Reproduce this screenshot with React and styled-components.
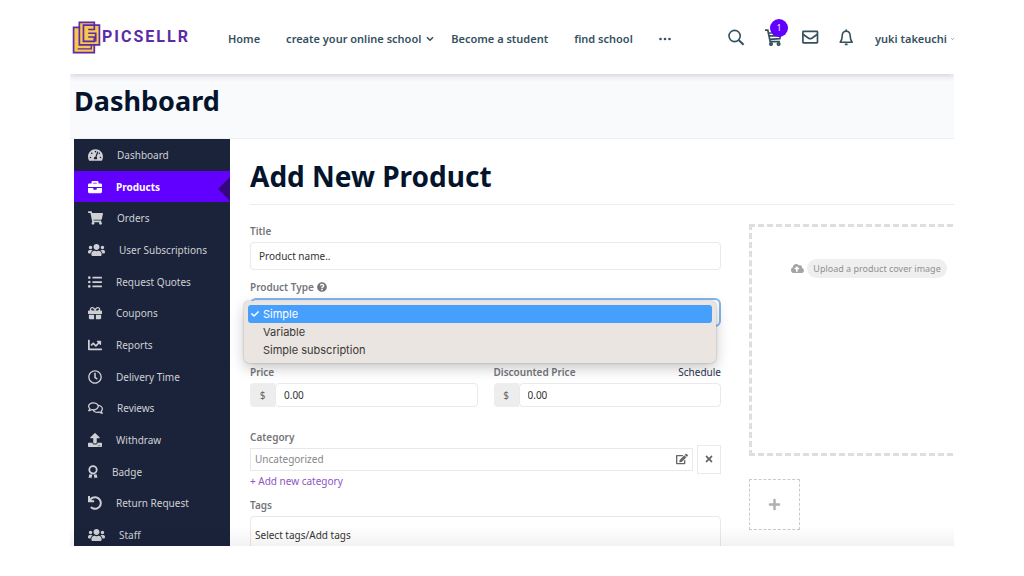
import React from 'react';
import styled, { createGlobalStyle, css } from 'styled-components';
import {
  FaTachometerAlt, FaBriefcase, FaShoppingCart, FaUsers, FaListUl, FaGift, FaChartLine,
  FaRegClock, FaRegComments, FaUpload, FaUndo, FaQuestionCircle, FaEdit, FaTimes,
  FaCloudUploadAlt, FaPlus, FaCheck,
} from 'react-icons/fa';

const Global = createGlobalStyle`
  * { box-sizing: border-box; }
  body { margin: 0; background: #fff; font-family: "Noto Sans", "Open Sans", sans-serif; font-size: 10px; color: #333; }
  button, input, select { font: inherit; color: inherit; margin: 0; }
  button { border: 0; background: none; padding: 0; }
  h1, h2, ul { margin: 0; padding: 0; }
  ul { list-style: none; }
  a { text-decoration: none; color: inherit; }
`;

const Frame = styled.div`
  position: relative;
  height: calc(100vh - 30px);
  margin: 0 70px;
  overflow: hidden;
  &::after {
    content: "";
    position: absolute;
    inset: auto 0 0 0;
    height: 20px;
    background: linear-gradient(transparent, rgba(0, 0, 0, 0.05));
    pointer-events: none;
  }
`;

const Header = styled.header`
  position: relative;
  display: flex;
  align-items: center;
  height: 74px;
  padding-left: 2px;
  color: #35505f;
  box-shadow: 0 2px 6px rgba(40, 40, 80, 0.18);
`;

const Logo = styled.a`
  display: flex;
  flex: none;
  align-items: center;
  gap: 1px;
  width: 122px;
  color: #5b2ba8;
  font: 700 16px/20px Roboto, sans-serif;
  letter-spacing: 2px;
  svg { flex: none; }
`;

const Nav = styled.nav`
  display: flex;
  align-items: center;
  gap: 26px;
  margin-left: 34px;
  padding-top: 3px;
  font-size: 11px;
  line-height: 16px;
  font-weight: 600;
  white-space: nowrap;
`;

const NavGroup = styled.div`
  display: flex;
  align-items: center;
  gap: 17px;
`;

const NavLink = styled.a`
  display: flex;
  align-items: center;
  gap: 5px;
`;

const Tools = styled.div`
  display: flex;
  align-items: center;
  gap: 20px;
  margin-left: auto;
`;

const ToolButton = styled.button`
  position: relative;
  display: flex;
`;

const Count = styled.span`
  position: absolute;
  left: 5px;
  top: -10px;
  width: 18px;
  height: 18px;
  border-radius: 50%;
  background: #6200ff;
  color: #fff;
  font-size: 8px;
  line-height: 18px;
  text-align: center;
`;

const UserButton = styled.button`
  display: flex;
  align-items: center;
  gap: 4px;
  width: 79px;
  padding-top: 3px;
  overflow: hidden;
  font-size: 11px;
  line-height: 16px;
  font-weight: 600;
  white-space: nowrap;
`;

const TitleBand = styled.div`
  height: 65px;
  padding: 9px 4px;
  background: #f9fafc;
  border-bottom: 1px solid #eef0f3;
`;

const Heading = styled.h1`
  font-size: ${(p) => (p.$large ? '28px' : '27px')};
  line-height: 36px;
  font-weight: 700;
  color: #04142d;
`;

const Body = styled.div`
  display: flex;
  align-items: flex-start;
  padding-left: 4px;
`;

const Sidebar = styled.nav`
  flex: none;
  width: 156px;
  background: #1b233b;
`;

const Menu = styled.ul`
  display: flex;
  flex-direction: column;
  height: 412px;
`;

const MenuItem = styled.li`
  position: relative;
  display: flex;
  flex: 1;
  ${(p) => p.$active && css`
    background: #6200ff;
    &::after {
      content: "";
      position: absolute;
      right: 0;
      top: 6px;
      border: 12px solid transparent;
      border-left-width: 0;
      border-right-color: #32087c;
    }
  `}
`;

const MenuLink = styled.a`
  display: flex;
  flex: 1;
  align-items: center;
  gap: 14px;
  padding-left: 14px;
  color: ${(p) => (p.$active ? '#fff' : '#cfd0d4')};
  font-weight: ${(p) => (p.$active ? 700 : 400)};
  svg { flex: none; width: ${(p) => p.$icon}px; height: 14px; }
`;

const Main = styled.main`
  flex: 1;
  min-width: 0;
  padding: 19px 0 0 20px;
`;

const MainHead = styled.div`
  padding-bottom: 10px;
  border-bottom: 1px solid #ececee;
`;

const Columns = styled.div`
  display: flex;
  gap: 28px;
  padding-top: 19px;
`;

const Form = styled.form`
  flex: 1;
  min-width: 0;
`;

const Field = styled.div`
  position: relative;
  margin-bottom: ${(p) => p.$space || 10}px;
`;

const LabelRow = styled.div`
  display: flex;
  align-items: center;
  gap: 3px;
  height: 14px;
  margin-bottom: 4px;
  color: #74767a;
`;

const Label = styled.label`
  font-weight: 600;
`;

const ScheduleLink = styled.a`
  margin-left: auto;
  color: #2a3350;
`;

const box = css`
  border: 1px solid #e9e9eb;
  border-radius: 4px;
  background: #fff;
  outline: 0;
`;

const TextInput = styled.input`
  ${box}
  display: block;
  width: 100%;
  height: ${(p) => (p.$tall ? '38px' : '28px')};
  padding: 0 ${(p) => (p.$tall ? '4px' : '8px')};
  color: #333;
  &::placeholder { color: #333; opacity: 1; }
`;

const TypeSelect = styled.select`
  ${box}
  appearance: none;
  display: block;
  width: 100%;
  height: 29px;
  padding: 0 8px;
  border: 2px solid #80b7f0;
  border-radius: 6px;
`;

const Options = styled.ul`
  position: absolute;
  z-index: 2;
  top: 21px;
  left: -6px;
  right: 5px;
  padding: 4px;
  border-radius: 5px;
  background: #eae5e1;
  box-shadow: 0 5px 14px rgba(0, 0, 0, 0.22), 0 0 2px rgba(0, 0, 0, 0.3);
  color: #3a3837;
  font: 11px/18px Inter, sans-serif;
`;

const Option = styled.li`
  display: flex;
  align-items: center;
  gap: 4px;
  height: 18px;
  padding-left: ${(p) => (p.$selected ? '3px' : '15px')};
  border-radius: 3px;
  background: ${(p) => (p.$selected ? '#479ffd' : 'none')};
  color: ${(p) => (p.$selected ? '#fff' : 'inherit')};
`;

const Prices = styled.div`
  display: grid;
  grid-template-columns: 1fr 1fr;
  gap: 16px;
`;

const Money = styled.div`
  display: flex;
  height: 24px;
`;

const Currency = styled.span`
  width: 25px;
  border-radius: 4px 0 0 4px;
  background: #ededee;
  color: #666;
  line-height: 24px;
  text-align: center;
`;

const Amount = styled.input`
  ${box}
  flex: 1;
  min-width: 0;
  padding: 0 8px;
`;

const CategoryRow = styled.div`
  display: flex;
  align-items: center;
  gap: 4px;
  height: 22px;
`;

const CategoryBox = styled.button`
  ${box}
  display: flex;
  flex: 1;
  align-items: center;
  justify-content: space-between;
  height: 23px;
  padding: 0 4px;
  border-radius: 0;
  color: #84868a;
  svg { color: #666; }
`;

const RemoveButton = styled.button`
  ${box}
  display: grid;
  place-items: center;
  width: 24px;
  height: 29px;
  border-radius: 0;
  color: #666;
`;

const AddLink = styled.a`
  display: block;
  margin-top: 4px;
  line-height: 14px;
  color: #8d55c4;
`;

const Media = styled.aside`
  flex: none;
  width: 205px;
`;

const Cover = styled.div`
  display: flex;
  justify-content: center;
  align-items: flex-start;
  gap: 3px;
  width: 240px;
  height: 232px;
  padding-top: 32px;
  border: 3px dashed #dedede;
  color: #a5a5a5;
`;

const CoverButton = styled.button`
  height: 19px;
  padding: 0 6px;
  border-radius: 10px;
  background: #efefef;
  color: #8f8f8f;
  font-size: 9px;
  white-space: nowrap;
`;

const CoverIcon = styled(FaCloudUploadAlt)`
  width: 13px;
  height: 13px;
  margin-top: 3px;
`;

const AddImage = styled.button`
  display: grid;
  place-items: center;
  width: 51px;
  height: 51px;
  margin-top: 23px;
  border: 1px dashed #cacaca;
  color: #b0b0b0;
`;

const LogoMark = () => (
  <svg width="29" height="33" viewBox="24 37 84 97" fill="none" stroke="#5b2ba8" strokeWidth="5">
    <path d="M45 41H89V49H104V107H89V130H28V56H45Z" fill="#f9c74f" />
    <path d="M45 56V107H89" strokeWidth="5" />
    <path d="M89 49H57V97H89V84H71M71 62H89V49M71 73H93V97" />
    <path d="M80 107V119H40" strokeWidth="4" />
  </svg>
);

const Chevron = () => (
  <svg width="8" height="6" viewBox="0 0 8 6" fill="none" stroke="currentColor" strokeWidth="1.6">
    <path d="M1 1.2L4 4.2L7 1.2" />
  </svg>
);

const SearchIcon = () => (
  <svg width="17" height="17" viewBox="0 0 17 17" fill="none" stroke="currentColor" strokeWidth="1.6">
    <circle cx="6.6" cy="7" r="5.6" />
    <path d="M10.6 11L15.6 15.8" strokeWidth="2" />
  </svg>
);

const CartIcon = () => (
  <svg width="17" height="17" viewBox="0 0 17 17" fill="none" stroke="currentColor" strokeWidth="1.7">
    <path d="M0 1.2H2.8L5.2 12.6H15M3.4 4H16L14.8 9.6L4.8 10.4M4 6.8H15" />
    <circle cx="6" cy="15" r="1.2" />
    <circle cx="13.6" cy="15" r="1.2" />
  </svg>
);

const MailIcon = () => (
  <svg width="17" height="14" viewBox="0 0 17 14" fill="none" stroke="currentColor" strokeWidth="1.7">
    <rect x="0.9" y="1.4" width="14.6" height="11.4" rx="0.6" />
    <path d="M1 4.2L6.6 8.2Q8.2 9.2 9.8 8.2L15.4 4.2" />
  </svg>
);

const BellIcon = () => (
  <svg width="16" height="17" viewBox="0 0 16 17" fill="none" stroke="currentColor" strokeWidth="1.6">
    <path d="M1.2 13.2C3 11 3.2 9.4 3.2 7C3.2 4 5 2.2 7.2 2.2S11.2 4 11.2 7C11.2 9.4 11.4 11 13.2 13.2Z" strokeLinejoin="round" />
    <path d="M7.2 0.4V2.2M5.8 15.4H8.6" strokeWidth="1.8" />
  </svg>
);

const BadgeIcon = () => (
  <svg viewBox="0 0 10 14" fill="none" stroke="currentColor" strokeWidth="1.8">
    <circle cx="5" cy="4.8" r="3.7" />
    <path d="M1.2 9.4L3.4 9.2L4.2 10L3.4 13.4L2.2 12.4L0.6 13ZM8.8 9.4L6.6 9.2L5.8 10L6.6 13.4L7.8 12.4L9.4 13Z" fill="currentColor" stroke="none" />
  </svg>
);

const items = [
  ['Dashboard', FaTachometerAlt, 15],
  ['Products', FaBriefcase, 14],
  ['Orders', FaShoppingCart, 15],
  ['User Subscriptions', FaUsers, 17],
  ['Request Quotes', FaListUl, 14],
  ['Coupons', FaGift, 14],
  ['Reports', FaChartLine, 14],
  ['Delivery Time', FaRegClock, 14],
  ['Reviews', FaRegComments, 15],
  ['Withdraw', FaUpload, 14],
  ['Badge', BadgeIcon, 10],
  ['Return Request', FaUndo, 14],
  ['Staff', FaUsers, 17],
];

export default function App() {
  return (
    <>
      <Global />
      <Frame>
        <Header>
          <Logo href="#"><LogoMark />PICSELLR</Logo>
          <Nav>
            <NavLink href="#">Home</NavLink>
            <NavGroup>
              <NavLink href="#">create your online school<Chevron /></NavLink>
              <NavLink href="#">Become a student</NavLink>
            </NavGroup>
            <NavLink href="#">find school</NavLink>
            <NavLink href="#" aria-label="More">
              <svg width="12" height="4" viewBox="0 0 12 4" fill="currentColor">
                <circle cx="1.5" cy="2" r="1.3" /><circle cx="6" cy="2" r="1.3" /><circle cx="10.5" cy="2" r="1.3" />
              </svg>
            </NavLink>
          </Nav>
          <Tools>
            <ToolButton aria-label="Search"><SearchIcon /></ToolButton>
            <ToolButton aria-label="Cart"><CartIcon /><Count>1</Count></ToolButton>
            <ToolButton aria-label="Messages"><MailIcon /></ToolButton>
            <ToolButton aria-label="Notifications"><BellIcon /></ToolButton>
            <UserButton>yuki takeuchi<Chevron /></UserButton>
          </Tools>
        </Header>
        <TitleBand><Heading>Dashboard</Heading></TitleBand>
        <Body>
          <Sidebar>
            <Menu>
              {items.map(([name, Icon, width]) => (
                <MenuItem key={name} $active={name === 'Products'}>
                  <MenuLink href="#" $active={name === 'Products'} $icon={width}><Icon />{name}</MenuLink>
                </MenuItem>
              ))}
            </Menu>
          </Sidebar>
          <Main>
            <MainHead><Heading as="h2" $large>Add New Product</Heading></MainHead>
            <Columns>
              <Form>
                <Field>
                  <LabelRow><Label htmlFor="title">Title</Label></LabelRow>
                  <TextInput id="title" placeholder="Product name.." />
                </Field>
                <Field $space={38}>
                  <LabelRow><Label htmlFor="type">Product Type</Label><FaQuestionCircle /></LabelRow>
                  <TypeSelect id="type" defaultValue="Simple">
                    <option>Simple</option>
                    <option>Variable</option>
                    <option>Simple subscription</option>
                  </TypeSelect>
                  <Options>
                    <Option $selected><FaCheck size={8} />Simple</Option>
                    <Option>Variable</Option>
                    <Option>Simple subscription</Option>
                  </Options>
                </Field>
                <Prices>
                  <Field $space={23}>
                    <LabelRow><Label htmlFor="price">Price</Label></LabelRow>
                    <Money><Currency>$</Currency><Amount id="price" defaultValue="0.00" /></Money>
                  </Field>
                  <Field $space={23}>
                    <LabelRow>
                      <Label htmlFor="sale">Discounted Price</Label>
                      <ScheduleLink href="#">Schedule</ScheduleLink>
                    </LabelRow>
                    <Money><Currency>$</Currency><Amount id="sale" defaultValue="0.00" /></Money>
                  </Field>
                </Prices>
                <Field>
                  <LabelRow><Label htmlFor="category">Category</Label></LabelRow>
                  <CategoryRow>
                    <CategoryBox id="category" type="button">Uncategorized<FaEdit size={12} /></CategoryBox>
                    <RemoveButton type="button" aria-label="Remove category"><FaTimes size={10} /></RemoveButton>
                  </CategoryRow>
                  <AddLink href="#">+ Add new category</AddLink>
                </Field>
                <Field>
                  <LabelRow><Label htmlFor="tags">Tags</Label></LabelRow>
                  <TextInput id="tags" $tall placeholder="Select tags/Add tags" />
                </Field>
              </Form>
              <Media>
                <Cover><CoverIcon /><CoverButton>Upload a product cover image</CoverButton></Cover>
                <AddImage aria-label="Add gallery image"><FaPlus size={13} /></AddImage>
              </Media>
            </Columns>
          </Main>
        </Body>
      </Frame>
    </>
  );
}
